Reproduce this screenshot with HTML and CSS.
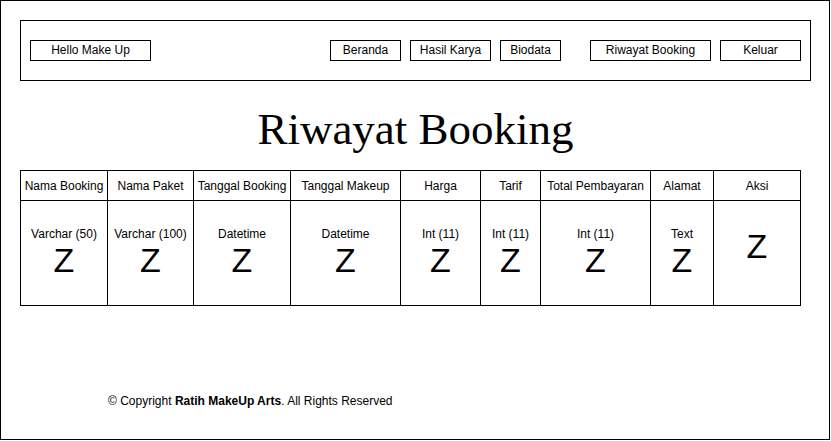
FILE: index.html
```html
<!DOCTYPE html>
<html lang="id">
<head>
<meta charset="utf-8">
<title>Riwayat Booking</title>
<link rel="stylesheet" href="styles.css">
</head>
<body>
<div class="frame">
  <header class="navbar">
    <div class="btn btn-brand">Hello Make Up</div>
    <nav class="menu">
      <div class="btn btn-beranda">Beranda</div>
      <div class="btn btn-hasil">Hasil Karya</div>
      <div class="btn btn-biodata">Biodata</div>
      <div class="btn btn-riwayat">Riwayat Booking</div>
      <div class="btn btn-keluar">Keluar</div>
    </nav>
  </header>

  <h1 class="title">Riwayat Booking</h1>

  <div class="grid">
    <div class="th">Nama Booking</div>
    <div class="th">Nama Paket</div>
    <div class="th">Tanggal Booking</div>
    <div class="th">Tanggal Makeup</div>
    <div class="th">Harga</div>
    <div class="th">Tarif</div>
    <div class="th">Total Pembayaran</div>
    <div class="th">Alamat</div>
    <div class="th">Aksi</div>

    <div class="td"><span class="type">Varchar (50)</span><span class="z">Z</span></div>
    <div class="td"><span class="type">Varchar (100)</span><span class="z">Z</span></div>
    <div class="td"><span class="type">Datetime</span><span class="z">Z</span></div>
    <div class="td"><span class="type">Datetime</span><span class="z">Z</span></div>
    <div class="td"><span class="type">Int (11)</span><span class="z">Z</span></div>
    <div class="td"><span class="type">Int (11)</span><span class="z">Z</span></div>
    <div class="td"><span class="type">Int (11)</span><span class="z">Z</span></div>
    <div class="td"><span class="type">Text</span><span class="z">Z</span></div>
    <div class="td td-aksi"><span class="z">Z</span></div>
  </div>

  <footer class="footer">© Copyright <strong>Ratih MakeUp Arts</strong>. All Rights Reserved</footer>
</div>
</body>
</html>
```

FILE: styles.css
```css
* { box-sizing: border-box; }

html, body {
  margin: 0;
  padding: 0;
  background: #fff;
}

body {
  font-family: "Liberation Sans", Arial, sans-serif;
  font-size: 12px;
  color: #000;
}

.frame {
  width: 830px;
  height: 440px;
  border: 1px solid #000;
  padding: 19px 18px 0 19px;
}

.navbar {
  width: 791px;
  height: 61px;
  border: 1px solid #000;
  padding: 19px 9px 0 9px;
  display: flex;
  justify-content: space-between;
  align-items: flex-start;
}

.menu {
  display: flex;
}

.btn {
  height: 21px;
  border: 1px solid #000;
  line-height: 19px;
  text-align: center;
  white-space: nowrap;
}

.btn-brand { width: 121px; }
.btn-beranda { width: 71px; }
.btn-hasil { width: 81px; margin-left: 9px; }
.btn-biodata { width: 61px; margin-left: 9px; }
.btn-riwayat { width: 121px; margin-left: 29px; }
.btn-keluar { width: 81px; margin-left: 9px; }

.title {
  margin: 22px 0 15px 0;
  width: 791px;
  font-family: "Liberation Serif", "Times New Roman", serif;
  font-weight: normal;
  font-size: 45px;
  line-height: 52px;
  text-align: center;
}

.grid {
  width: 781px;
  display: grid;
  grid-template-columns: 86px 85px 96px 109px 79px 59px 109px 62px 86px;
  grid-template-rows: 29px 104px;
  gap: 1px;
  padding: 1px;
  background: #000;
}

.th {
  background: #fff;
  display: flex;
  align-items: center;
  justify-content: center;
  line-height: 14px;
  white-space: nowrap;
}

.td {
  background: #fff;
  display: flex;
  flex-direction: column;
  align-items: center;
  padding-top: 26px;
}

.type {
  line-height: 14px;
  margin-bottom: 2px;
  white-space: nowrap;
}

.z {
  font-size: 34px;
  line-height: 34px;
}

.td-aksi {
  padding-top: 28px;
}

.footer {
  margin: 88px 0 0 88px;
  line-height: 14px;
}

.footer strong {
  font-weight: bold;
}
```
